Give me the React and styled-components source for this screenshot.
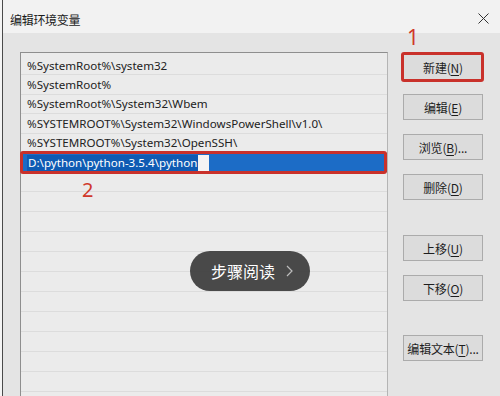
import React from "react";
import styled, { createGlobalStyle } from "styled-components";

const Global = createGlobalStyle`
  html, body { margin: 0; padding: 0; background: #f2f2f2; }
  body { font-family: "Noto Sans", "Noto Sans CJK SC", sans-serif; }
`;

const Frame = styled.div`
  width: 500px;
  height: 396px;
  overflow: hidden;
  background: #f4f4f4;
  padding-left: 2px;
  box-sizing: border-box;
  position: relative;
`;

const Win = styled.div`
  height: 100%;
  border-left: 1px solid #4a4a4a;
  display: flex;
  flex-direction: column;
`;

const TitleBar = styled.div`
  height: 33px;
  flex: none;
  background: #f2f2f2;
  display: flex;
  align-items: center;
  justify-content: space-between;
  padding: 5px 11px 0 7px;
  box-sizing: border-box;
`;

const Title = styled.span`
  font-family: "Noto Sans CJK SC", sans-serif;
  font-size: 12px;
  color: #1a1a1a;
  letter-spacing: -0.3px;
`;

const Close = styled.svg`
  width: 11px;
  height: 11px;
  margin-top: -2px;
`;

const Body = styled.div`
  flex: 1;
  background: #e4e4e4;
  display: flex;
  padding: 19px 0 0 17px;
  gap: 15px;
  min-height: 0;
  position: relative;
`;

const List = styled.div`
  width: 368px;
  height: 400px;
  flex: none;
  box-sizing: border-box;
  border: 1px solid #8e8e8e;
  border-right-color: #b4b4b4;
  background: #ebebeb;
  display: flex;
  flex-direction: column;
  padding-top: 3px;
  position: relative;
`;

const Row = styled.div`
  height: ${(p) => (p.$empty ? 20 : 19.4)}px;
  flex: none;
  box-sizing: border-box;
  border-bottom: 1px solid #dcdcdc;
  padding-left: 6px;
  display: flex;
  align-items: center;
  font-size: 11.6px;
  color: #222222;
  white-space: nowrap;
  position: relative;
`;

const EditRow = styled(Row)`
  background: #1c6cc6;
  padding-left: 4px;
  border-left: 2px solid #d9e4f0;
  border-bottom: none;
`;

const Sel = styled.span`
  background: #0f5bb3;
  color: #ffffff;
  padding: 0 1px;
  line-height: 16px;
`;

const Caret = styled.span`
  width: 11px;
  height: 16px;
  background: #f4f4f4;
`;

const RedBox = styled.div`
  position: absolute;
  left: -3px;
  right: 0;
  top: -2px;
  bottom: -2px;
  border: 3px solid #c9312b;
  border-radius: 3px;
  pointer-events: none;
`;

const Mark = styled.span`
  position: absolute;
  color: #d0382b;
  font-family: "Noto Sans", sans-serif;
  font-size: ${(p) => p.$size}px;
  line-height: 1;
  left: ${(p) => p.$x}px;
  top: ${(p) => p.$y}px;
`;

const Side = styled.div`
  width: 80px;
  display: flex;
  flex-direction: column;
  gap: 14px;
  padding-top: 2px;
`;

const Btn = styled.div`
  height: 26px;
  box-sizing: border-box;
  background: #dcdcdc;
  border: 1px solid #ababab;
  display: flex;
  align-items: center;
  justify-content: center;
  font-family: "Noto Sans CJK SC", sans-serif;
  font-size: 12px;
  color: #1e1e1e;
  position: relative;
  margin-top: ${(p) => p.$gap || 0}px;
  letter-spacing: -0.2px;
  u { text-decoration: underline; text-underline-offset: 2px; }
`;

const BtnBox = styled.div`
  position: absolute;
  left: -3px;
  right: -2px;
  top: -3px;
  bottom: -3px;
  border: 3px solid #c9312b;
  border-radius: 3px;
`;

const Pill = styled.div`
  position: absolute;
  left: 187px;
  top: 218px;
  width: 120px;
  height: 40px;
  border-radius: 20px;
  background: rgba(60, 60, 60, 0.93);
  display: flex;
  align-items: center;
  justify-content: center;
  gap: 11px;
  font-family: "Noto Sans CJK SC", sans-serif;
  font-size: 16px;
  color: #ffffff;
  padding-left: 4px;
  box-sizing: border-box;
`;

const Chev = styled.svg`
  width: 7px;
  height: 12px;
`;

const items = [
  "%SystemRoot%\\system32",
  "%SystemRoot%",
  "%SystemRoot%\\System32\\Wbem",
  "%SYSTEMROOT%\\System32\\WindowsPowerShell\\v1.0\\",
  "%SYSTEMROOT%\\System32\\OpenSSH\\",
];

export default function App() {
  return (
    <>
      <Global />
      <Frame>
        <Win>
          <TitleBar>
            <Title>编辑环境变量</Title>
            <Close viewBox="0 0 11 11">
              <path d="M0.5 0.5 L10.5 10.5 M10.5 0.5 L0.5 10.5" stroke="#333" strokeWidth="1" fill="none" />
            </Close>
          </TitleBar>
          <Body>
            <Mark $size={21} $x={404} $y={-6}>1</Mark>
            <List>
              {items.map((t) => (
                <Row key={t}>{t}</Row>
              ))}
              <EditRow>
                <Sel>D:\python\python-3.5.4\python</Sel>
                <Caret />
                <RedBox />
              </EditRow>
              {Array.from({ length: 14 }).map((_, i) => (
                <Row $empty key={"e" + i} />
              ))}
              <Mark $size={20} $x={61} $y={127}>2</Mark>
            </List>
            <Side>
              <Btn>
                新建(<u>N</u>)
                <BtnBox />
              </Btn>
              <Btn>编辑(<u>E</u>)</Btn>
              <Btn>浏览(<u>B</u>)...</Btn>
              <Btn>删除(<u>D</u>)</Btn>
              <Btn $gap={21}>上移(<u>U</u>)</Btn>
              <Btn>下移(<u>O</u>)</Btn>
              <Btn $gap={20}>编辑文本(<u>T</u>)...</Btn>
            </Side>
            <Pill>
              步骤阅读
              <Chev viewBox="0 0 7 12">
                <path d="M1 1 L6 6 L1 11" stroke="#bdbdbd" strokeWidth="1.2" fill="none" />
              </Chev>
            </Pill>
          </Body>
        </Win>
      </Frame>
    </>
  );
}
